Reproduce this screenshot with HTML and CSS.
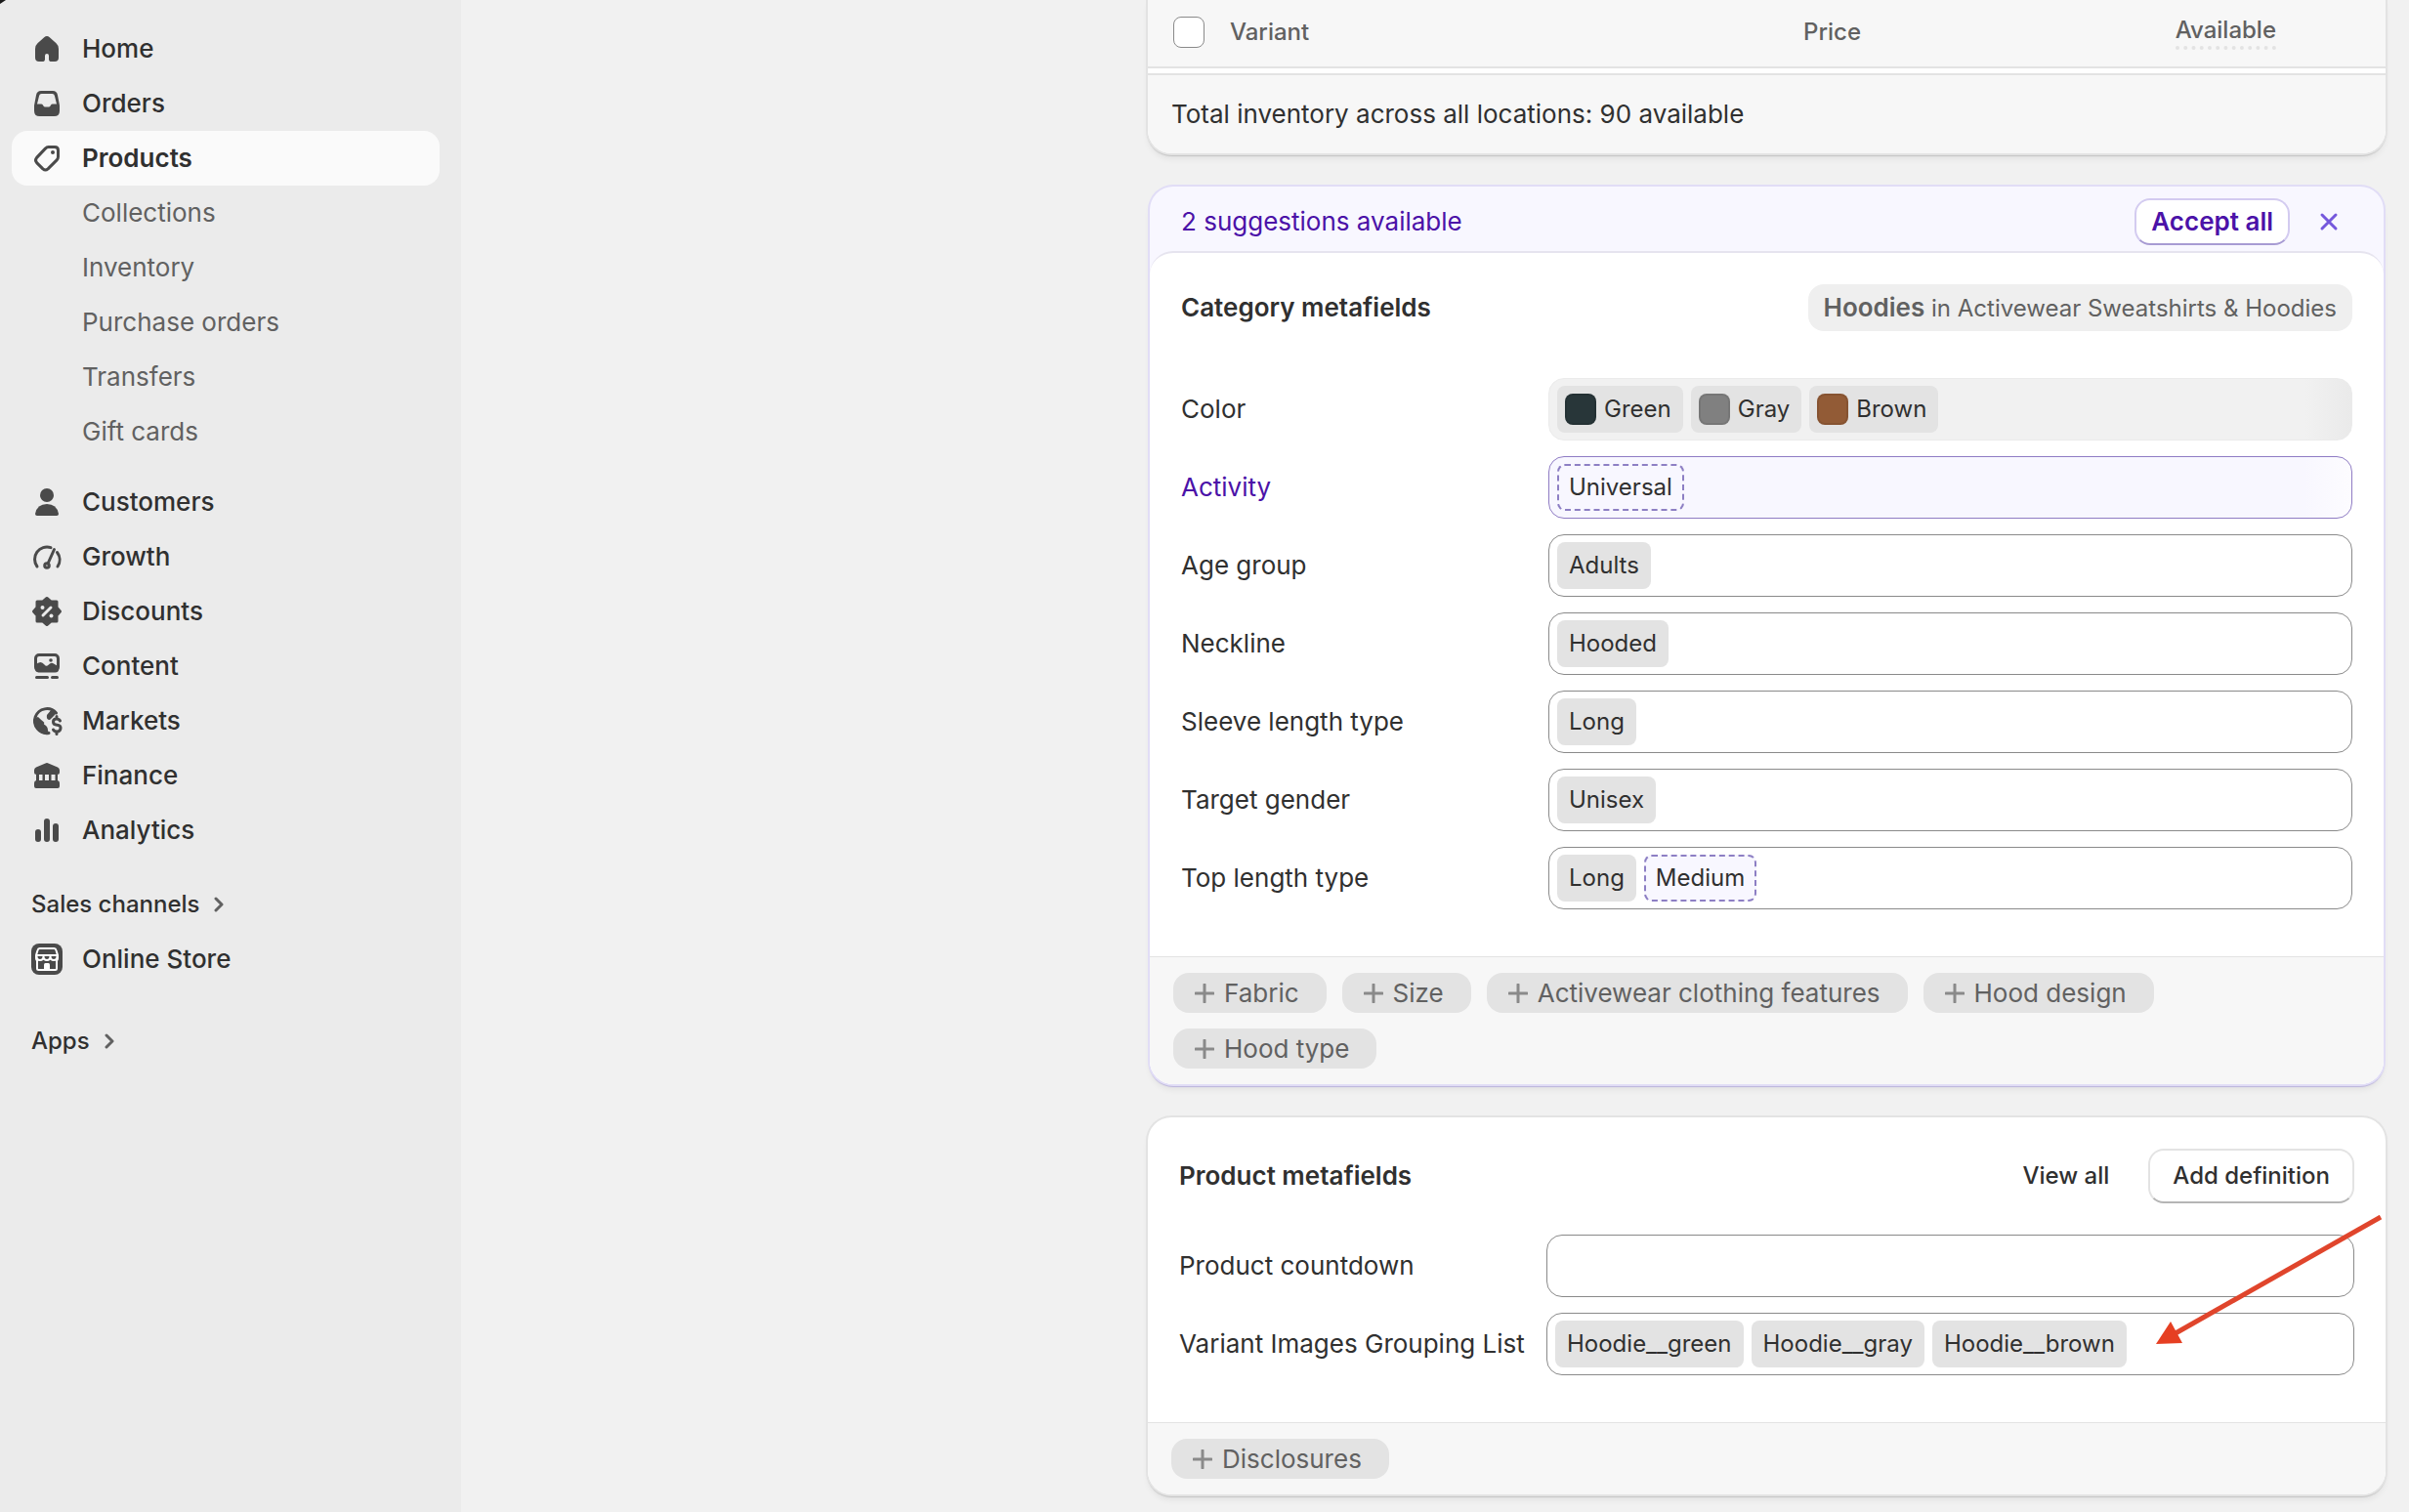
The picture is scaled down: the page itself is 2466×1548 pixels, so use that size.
FILE: index.html
```html
<!DOCTYPE html>
<html lang="en">
<head>
<meta charset="utf-8">
<title>Products</title>
<link rel="stylesheet" href="styles.css">
</head>
<body>
<div class="app">
  <div class="window-corner"></div>
  <nav class="sidebar" aria-label="Main">
    <ul class="nav">
      <li><a class="nav-link" href="#"><svg class="nav-icon" viewBox="0 0 40 40"><path d="M17.200 8.200q2.800-2.400 5.600 0l6.700 6.100q2.500 2.300 2.500 5.700v9q0 4-4 4h-3.200q-2.800 0-2.800-2.600v-3.400q0-2-2-2t-2 2v3.400q0 2.600-2.800 2.600H12q-4 0-4-4v-9q0-3.400 2.500-5.700z"/></svg>Home</a></li>
      <li><a class="nav-link" href="#"><svg class="nav-icon" viewBox="0 0 40 40"><path fill-rule="evenodd" d="M14 7h12q4.300 0 5 4.600L33 22v5.500q0 5.500-5.500 5.500h-15Q7 33 7 27.500V22l2-10.400Q9.700 7 14 7zm.5 3q-2 0-2.400 2L10 20.500h4.200q1.200 0 1.700 1 .9 2 2 2h4.200q1.100 0 2-2 .5-1 1.700-1H30L27.900 12q-.4-2-2.400-2z"/></svg>Orders</a></li>
      <li><a class="nav-link current" href="#" aria-current="page"><svg class="nav-icon" viewBox="0 0 40 40"><path class="line" d="M21.500 8.500h6.500q3.500 0 3.500 3.500v6.500q0 2-1.400 3.400l-9 9q-2.600 2.200-5.200 0l-6.300-6.300q-2.200-2.600 0-5.200l9-9.500q1.200-1.400 2.900-1.400z"/><circle cx="26" cy="14" r="2"/></svg>Products</a></li>
      <li><a class="nav-link sub" href="#">Collections</a></li>
      <li><a class="nav-link sub" href="#">Inventory</a></li>
      <li><a class="nav-link sub" href="#">Purchase orders</a></li>
      <li><a class="nav-link sub" href="#">Transfers</a></li>
      <li><a class="nav-link sub" href="#">Gift cards</a></li>
    </ul>
    <ul class="nav nav-tools">
      <li><a class="nav-link" href="#"><svg class="nav-icon" viewBox="0 0 40 40"><circle cx="20" cy="13" r="7"/><path d="M8 32q2-10 12-10t12 10q0 2-2 2H10q-2 0-2-2z"/></svg>Customers</a></li>
      <li><a class="nav-link" href="#"><svg class="nav-icon" viewBox="0 0 40 40"><path class="line" d="M10 30A12.500 12.500 0 0 1 24 10.700M30.500 15.500A12.500 12.500 0 0 1 31 30M21 27l6.500-14.500"/><circle class="line" cx="20" cy="29" r="2.300"/></svg>Growth</a></li>
      <li><a class="nav-link" href="#"><svg class="nav-icon" viewBox="0 0 40 40"><path class="joined" d="M20 6.500l4 3.500h6v6l3.500 4-3.500 4v6h-6l-4 3.500-4-3.500h-6v-6l-3.500-4 3.500-4v-6h6z"/><path class="cut" d="M16 24l8-8"/><circle class="cut-dot" cx="15.500" cy="16" r="2"/><circle class="cut-dot" cx="24.500" cy="24.500" r="2"/></svg>Discounts</a></li>
      <li><a class="nav-link" href="#"><svg class="nav-icon" viewBox="0 0 40 40"><rect class="line" x="8.500" y="8.500" width="23" height="16" rx="3.500"/><path d="M8 19q3-3 5.500-3 2 0 4 2.500 1.500 2 3 1 1.500-1 2.500-2 2-1.500 4 0l5 3v3q0 3-3.500 3h-17Q8 26 8 23z"/><circle cx="24" cy="14" r="1.800"/><path class="line" d="M9.500 31.500h11M25.500 31.500h5"/></svg>Content</a></li>
      <li><a class="nav-link" href="#"><svg class="nav-icon" viewBox="0 0 40 40"><path class="line" d="M22 32.500A12.500 12.500 0 1 1 29.500 12"/><path d="M8 17l3-1q3 3 5 4.500 2 1 1 3 4 2 4 6l1 4q-8 1-12-5-4-5-2-11.500zM20 14l5-6 5 3-2 3-5 5q-4 0-3-5z"/><path class="line" d="M33.500 20q-1-2-4-2t-3 3 4 3.300 3.500 3.500-3.500 3.200q-3 0-4-2M30 15.500V18M30 31v2.500"/></svg>Markets</a></li>
      <li><a class="nav-link" href="#"><svg class="nav-icon" viewBox="0 0 40 40"><path d="M18.500 7.500q1.500-.8 3 0l9.500 4q2 1 2 3v2q0 2.500-2.500 2.500h-21Q7 19 7 16.500v-2q0-2 2-3zM9 19h3v7H9zM15.500 19h2.500v7h-2.500zM22 19h2.500v7H22zM28.500 19h2.500v7h-2.500zM10 25h20q3 0 3 3v3q0 2-2 2H9q-2 0-2-2v-3q0-3 3-3z"/></svg>Finance</a></li>
      <li><a class="nav-link" href="#"><svg class="nav-icon" viewBox="0 0 40 40"><rect x="8" y="19" width="6" height="13" rx="3"/><rect x="17" y="8" width="6" height="24" rx="3"/><rect x="26" y="13" width="6" height="19" rx="3"/></svg>Analytics</a></li>
    </ul>
    <section class="nav-section">
      <h2 class="nav-heading"><a href="#">Sales channels<svg class="chevron" viewBox="0 0 12 16"><path d="M3 2l6 6-6 6"/></svg></a></h2>
      <a class="nav-link" href="#"><svg class="nav-icon" viewBox="0 0 40 40"><rect x="4" y="4" width="32" height="32" rx="8"/><path class="store" d="M12.500 9h15q1.500 0 2 2l1.500 5v2.500q0 2.500-1 2.500v8.500q0 1.500-1.500 1.500h-17Q10 31 10 29.500V21q-1 0-1-2.500V16l1.500-5q.5-2 2-2zM9.500 16h21M9.500 17q0 4 3.500 4t3.500-4q0 4 3.500 4t3.500-4q0 4 3.500 4t3.500-4"/><path class="store-door" d="M17 31v-5.500q0-1.500 1.500-1.500h3q1.500 0 1.500 1.500V31z"/></svg>Online Store</a>
    </section>
    <section class="nav-section nav-apps">
      <h2 class="nav-heading"><a href="#">Apps<svg class="chevron" viewBox="0 0 12 16"><path d="M3 2l6 6-6 6"/></svg></a></h2>
    </section>
  </nav>

  <main class="content">
    <div class="cards">
      <section class="card variants">
        <table class="variant-table">
          <thead>
            <tr>
              <th class="col-check"><input class="check" type="checkbox" aria-label="Select all variants"></th>
              <th class="col-variant">Variant</th>
              <th class="col-price">Price</th>
              <th class="col-available"><span class="hint">Available</span></th>
            </tr>
          </thead>
        </table>
        <p class="total">Total inventory across all locations: 90 available</p>
      </section>

      <section class="card suggested">
        <header class="suggest-bar">
          <p class="suggest-text">2 suggestions available</p>
          <button class="accept" type="button">Accept all</button>
          <button class="dismiss" type="button" aria-label="Dismiss"><svg viewBox="0 0 20 20"><path d="M3 3l14 14M17 3L3 17"/></svg></button>
        </header>
        <div class="panel">
          <div class="panel-body">
            <div class="panel-head">
              <h2 class="title">Category metafields</h2>
              <span class="category"><b>Hoodies</b> in Activewear Sweatshirts &amp; Hoodies</span>
            </div>
            <dl class="fields">
              <dt>Color</dt>
              <dd class="field field-muted"><span class="tag"><i class="swatch green"></i>Green</span><span class="tag"><i class="swatch gray"></i>Gray</span><span class="tag"><i class="swatch brown"></i>Brown</span></dd>
              <dt class="suggested-label">Activity</dt>
              <dd class="field field-suggested"><span class="tag tag-suggested">Universal</span></dd>
              <dt>Age group</dt>
              <dd class="field"><span class="tag">Adults</span></dd>
              <dt>Neckline</dt>
              <dd class="field"><span class="tag">Hooded</span></dd>
              <dt>Sleeve length type</dt>
              <dd class="field"><span class="tag">Long</span></dd>
              <dt>Target gender</dt>
              <dd class="field"><span class="tag">Unisex</span></dd>
              <dt>Top length type</dt>
              <dd class="field"><span class="tag">Long</span><span class="tag tag-suggested">Medium</span></dd>
            </dl>
          </div>
          <footer class="panel-foot">
            <button class="add" type="button"><svg class="plus" viewBox="0 0 20 20"><path d="M10 1v18M1 10h18"/></svg>Fabric</button>
            <button class="add" type="button"><svg class="plus" viewBox="0 0 20 20"><path d="M10 1v18M1 10h18"/></svg>Size</button>
            <button class="add" type="button"><svg class="plus" viewBox="0 0 20 20"><path d="M10 1v18M1 10h18"/></svg>Activewear clothing features</button>
            <button class="add" type="button"><svg class="plus" viewBox="0 0 20 20"><path d="M10 1v18M1 10h18"/></svg>Hood design</button>
            <button class="add" type="button"><svg class="plus" viewBox="0 0 20 20"><path d="M10 1v18M1 10h18"/></svg>Hood type</button>
          </footer>
        </div>
      </section>

      <section class="card product">
        <div class="panel-body">
          <div class="panel-head product-head">
            <h2 class="title">Product metafields</h2>
            <a class="view-all" href="#">View all</a>
            <button class="define" type="button">Add definition</button>
          </div>
          <div class="fields">
            <label for="countdown">Product countdown</label>
            <input class="field" id="countdown" type="text">
            <span>Variant Images Grouping List</span>
            <div class="field"><span class="tag">Hoodie__green</span><span class="tag">Hoodie__gray</span><span class="tag">Hoodie__brown</span></div>
          </div>
        </div>
        <footer class="panel-foot">
          <button class="add" type="button"><svg class="plus" viewBox="0 0 20 20"><path d="M10 1v18M1 10h18"/></svg>Disclosures</button>
        </footer>
        <svg class="arrow" viewBox="0 0 234 136"><path class="arrow-line" d="M230 2L20 121"/><path class="arrow-head" d="M0 132l15-23 12 22z"/></svg>
      </section>
    </div>
  </main>
</div>
</body>
</html>
```

FILE: styles.css
```css
* { box-sizing: border-box; }

body {
  margin: 0;
  background: #f1f1f1;
  color: #303030;
  font: 400 26px/40px Inter, sans-serif;
}

h2, p, ul, dl, dd { margin: 0; padding: 0; }
ul { list-style: none; }
a { color: inherit; text-decoration: none; }
button, input { font: inherit; color: inherit; }
button { display: flex; align-items: center; justify-content: center; }

.app {
  position: relative;
  display: grid;
  grid-template-columns: 472px minmax(0, 1fr);
  min-height: 100vh;
}

.window-corner {
  position: absolute;
  top: 0;
  left: 0;
  width: 6px;
  height: 4px;
  background: #1a1a1a;
  clip-path: polygon(0 0, 100% 0, 0 100%);
}

/* Sidebar */
.sidebar {
  padding: 22px 22px 22px 12px;
  background: #ebebeb;
}
.nav-link {
  display: flex;
  align-items: center;
  gap: 16px;
  height: 56px;
  padding: 0 16px;
  border-radius: 16px;
  font-weight: 500;
}
.nav-link.current { background: #fafafa; font-weight: 600; }
.nav-link.sub { padding-left: 72px; color: #616161; font-weight: 400; }
.nav-icon { width: 40px; height: 40px; fill: #4a4a4a; }
.nav-icon .line { fill: none; stroke: #4a4a4a; stroke-width: 3; stroke-linecap: round; stroke-linejoin: round; }
.nav-icon .joined { stroke: #4a4a4a; stroke-width: 3; stroke-linejoin: round; }
.nav-icon .cut { fill: none; stroke: #ebebeb; stroke-width: 3; stroke-linecap: round; }
.nav-icon .cut-dot { fill: #ebebeb; }
.nav-icon .store { fill: none; stroke: #fff; stroke-width: 2; }
.nav-icon .store-door { fill: #fff; }
.nav-tools { margin-top: 16px; }
.nav-section { margin-top: 20px; }
.nav-apps { margin-top: 28px; }
.nav-heading { padding: 8px 20px; font-size: 24px; font-weight: 500; }
.nav-heading a { display: flex; align-items: center; gap: 14px; }
.chevron { width: 12px; height: 16px; fill: none; stroke: #616161; stroke-width: 3; stroke-linecap: round; stroke-linejoin: round; }

/* Cards */
.content {
  display: grid;
  grid-template-columns: 703fr 1267fr;
  padding-right: 24px;
}
.cards {
  grid-column: 2;
  display: flex;
  flex-direction: column;
  gap: 34px;
}
.card {
  position: relative;
  border-radius: 24px;
  background: #fff;
  box-shadow: 0 0 0 2px #e3e3e3, 0 2px 1px 1px #c4c4c4, 0 6px 6px rgba(0, 0, 0, .06);
}

.variants { border-radius: 0 0 24px 24px; }
.variant-table { width: 100%; border-spacing: 0; table-layout: fixed; background: #f7f7f7; }
.variant-table th {
  height: 70px;
  padding: 0 0 2px;
  border-bottom: 2px solid #e3e3e3;
  color: #616161;
  font-size: 24px;
  font-weight: 500;
  line-height: 32px;
  text-align: left;
}
.variant-table .col-check { width: 84px; padding-left: 26px; }
.variant-table .col-price { width: 320px; }
.variant-table .col-available { width: 276px; padding-right: 112px; text-align: right; }
.hint { display: inline-block; border-bottom: 4px dotted #e3e3e3; }
.check {
  display: block;
  width: 32px;
  height: 32px;
  margin: 0;
  border: 1px solid #8a8a8a;
  border-radius: 8px;
  background: #fff;
  appearance: none;
}
.total {
  margin-top: 5px;
  padding: 20px 24px;
  border-top: 2px solid #e3e3e3;
  border-radius: 0 0 24px 24px;
  background: #f7f7f7;
}

/* Suggested category fields */
.suggested {
  margin: 0 2px;
  background: #f8f7ff;
  box-shadow: 0 0 0 2px #e1ddf6, 0 2px 1px 1px #bab3dc, 0 6px 6px rgba(0, 0, 0, .06);
}
.suggest-bar {
  display: flex;
  align-items: center;
  height: 66px;
  padding: 6px 32px 0;
  color: #4b12a8;
}
.suggest-text { flex: 1; }
.accept {
  height: 48px;
  padding: 0 15px;
  border: 2px solid #d3cbf0;
  border-bottom-color: #a79bd3;
  border-radius: 16px;
  background: #fff;
  font-weight: 600;
}
.dismiss {
  width: 48px;
  height: 48px;
  margin-left: 16px;
  padding: 0;
  border: 0;
  background: none;
}
.dismiss svg { width: 20px; height: 20px; fill: none; stroke: #7558dc; stroke-width: 3; stroke-linecap: round; }
.panel {
  border-top: 2px solid #e6e4ef;
  border-radius: 24px;
  background: #fff;
}
.panel-body { padding: 32px 32px 48px; }
.panel-head {
  display: flex;
  align-items: center;
  justify-content: space-between;
  margin-bottom: 48px;
}
.title { font-size: 26px; font-weight: 600; }
.category {
  height: 48px;
  padding: 4px 16px;
  border-radius: 16px;
  background: #efefef;
  color: #616161;
  font-size: 24px;
}
.category b { font-size: 26px; font-weight: 600; }

.fields {
  display: grid;
  grid-template-columns: 376px minmax(0, 1fr);
  row-gap: 16px;
  align-items: center;
}
.field {
  display: flex;
  align-items: center;
  gap: 8px;
  width: 100%;
  height: 64px;
  padding: 0 8px;
  border: 1px solid #8a8a8a;
  border-radius: 16px;
  background: #fff;
}
.field-muted { border-color: #ebebeb; background: linear-gradient(90deg, #f1f1f1 calc(100% - 48px), #eaeaea); }
.field-suggested { border-color: #8f7cc4; background: linear-gradient(90deg, #f8f7ff calc(100% - 48px), #fdfcff); }
.suggested-label { color: #4b12a8; }
.tag {
  display: flex;
  align-items: center;
  gap: 8px;
  height: 48px;
  padding: 0 12px;
  border-radius: 8px;
  background: #e3e3e3;
  font-size: 24px;
}
.tag:has(.swatch) { padding-left: 8px; }
.tag-suggested { padding: 0 10px; border: 2px dashed #8d7fc4; background: #f8f7ff; }
.swatch { width: 32px; height: 32px; border-radius: 8px; box-shadow: inset 0 0 0 2px rgba(0, 0, 0, .08); }
.green { background: #283639; }
.gray { background: #808080; }
.brown { background: #925b36; }

.panel-foot {
  display: flex;
  flex-wrap: wrap;
  gap: 16px;
  padding: 16px 24px;
  border-top: 1px solid #e3e3e3;
  border-radius: 0 0 24px 24px;
  background: #f7f7f7;
}
.add {
  gap: 10px;
  height: 41px;
  padding: 0 28px 0 22px;
  border: 0;
  border-radius: 16px;
  background: #e3e3e3;
  color: #616161;
}
.plus { width: 20px; height: 20px; fill: none; stroke: #8a8a8a; stroke-width: 3; stroke-linecap: round; }

/* Product fields */
.product-head { margin-bottom: 32px; }
.product-head .title { flex: 1; }
.view-all { margin-right: 40px; font-size: 24px; font-weight: 500; }
.define {
  height: 56px;
  padding: 0 23px;
  border: 2px solid #e3e3e3;
  border-bottom-color: #b5b5b5;
  border-radius: 16px;
  background: #fff;
  font-size: 24px;
  font-weight: 500;
}
.arrow {
  position: absolute;
  top: 100px;
  right: 1px;
  width: 234px;
  height: 136px;
}
.arrow-line { fill: none; stroke: #e0452c; stroke-width: 5; }
.arrow-head { fill: #e63f22; }
```
